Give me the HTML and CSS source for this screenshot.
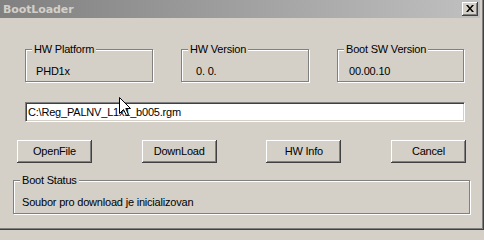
FILE: index.html
```html
<!DOCTYPE html>
<html>
<head>
<meta charset="utf-8">
<link rel="stylesheet" href="styles.css">
</head>
<body>
<div class="window">
  <div class="titlebar">
    <span class="title">BootLoader</span>
    <span class="close-btn"><svg width="8" height="7" viewBox="0 0 8 7"><path d="M0 0h2l2 2.5 2-2.5h2l-3 3.5 3 3.5h-2l-2-2.5-2 2.5h-2l3-3.5z" fill="#000"/></svg></span>
  </div>
  <div class="content">
    <div class="groups">
      <div class="group g1">
        <span class="glabel">HW Platform</span>
        <div class="gvalue">PHD1x</div>
      </div>
      <div class="group g2">
        <span class="glabel">HW Version</span>
        <div class="gvalue">0. 0.</div>
      </div>
      <div class="group g3">
        <span class="glabel">Boot SW Version</span>
        <div class="gvalue">00.00.10</div>
      </div>
    </div>
    <div class="input">C:\Reg_PALNV_L1x1_b005.rgm</div>
    <div class="buttons">
      <div class="btn">OpenFile</div>
      <div class="btn">DownLoad</div>
      <div class="btn">HW Info</div>
      <div class="btn">Cancel</div>
    </div>
    <div class="group status">
      <span class="glabel">Boot Status</span>
      <div class="gvalue">Soubor pro download je inicializovan</div>
    </div>
  </div>
  <svg class="cursor" width="13" height="20" viewBox="0 0 13 20"><path d="M0.5 0.5 L0.5 16.5 L4.5 12.5 L7.5 18.5 L9.5 17.5 L6.8 11.5 L11.5 11.5 Z" fill="#fff" stroke="#000" stroke-width="1" stroke-linejoin="miter"/></svg>
</div>
</body>
</html>
```

FILE: styles.css
```css
html, body {
  margin: 0;
  padding: 0;
  background: #d4d0c8;
}
.window {
  position: relative;
  width: 484px;
  height: 230px;
  box-sizing: border-box;
  padding-right: 4px;
  background: #d4d0c8;
  box-shadow: inset -1px -1px #404040, inset -2px -2px #808080;
  overflow: hidden;
  font-family: "Liberation Sans", Arial, sans-serif;
  font-size: 11px;
  letter-spacing: -0.2px;
  color: #000;
}
.titlebar {
  height: 18px;
  display: flex;
  align-items: center;
  justify-content: space-between;
  background: linear-gradient(to right, #808080, #c0c0c0);
  padding: 0 2px 0 3px;
  margin-bottom: 1px;
}
.title {
  font-family: "DejaVu Sans", Tahoma, sans-serif;
  font-weight: bold;
  font-size: 11px;
  color: #d4d0c8;
  letter-spacing: -0.1px;
}
.close-btn {
  width: 16px;
  height: 14px;
  box-sizing: border-box;
  background: #d4d0c8;
  box-shadow: inset -1px -1px #404040, inset 1px 1px #fff, inset -2px -2px #808080;
  display: flex;
  align-items: center;
  justify-content: center;
  padding-bottom: 1px;
}
.content {
  display: flex;
  flex-direction: column;
}
.groups {
  display: flex;
  padding-left: 25px;
  margin-top: 30px;
}
.group {
  box-sizing: border-box;
  height: 33px;
  border: 1px solid #808080;
  box-shadow: inset 1px 1px #fff, 1px 1px #fff;
  display: flex;
  flex-direction: column;
  align-items: flex-start;
  line-height: 13px;
}
.g1 { width: 128px; margin-right: 28px; }
.g2 { width: 128px; margin-right: 28px; }
.g3 { width: 127px; }
.glabel {
  margin: -7px 0 0 6px;
  padding: 0 2px;
  background: #d4d0c8;
  white-space: nowrap;
}
.gvalue {
  margin-top: 9px;
  white-space: nowrap;
}
.g1 .gvalue { padding-left: 10px; }
.g2 .gvalue { padding-left: 14px; }
.g3 .gvalue { padding-left: 11px; }
.input {
  margin: 20px 0 0 25px;
  width: 440px;
  height: 20px;
  box-sizing: border-box;
  background: #fff;
  border-top: 1px solid #808080;
  border-left: 1px solid #808080;
  border-right: 1px solid #fff;
  border-bottom: 1px solid #fff;
  box-shadow: inset 1px 1px #404040, inset -1px -1px #d4d0c8;
  padding: 2px 0 0 2px;
  line-height: 14px;
  white-space: nowrap;
}
.buttons {
  display: flex;
  justify-content: space-between;
  margin: 18px 0 0 17px;
  width: 449px;
}
.btn {
  width: 75px;
  height: 23px;
  box-sizing: border-box;
  display: flex;
  align-items: center;
  justify-content: center;
  background: #d4d0c8;
  box-shadow: inset -1px -1px #404040, inset 1px 1px #fff, inset -2px -2px #808080;
  padding-bottom: 1px;
}
.status {
  margin: 17px 0 0 13px;
  width: 457px;
  height: 34px;
}
.status .gvalue { padding-left: 8px; }
.cursor {
  position: absolute;
  left: 119px;
  top: 97px;
}
```
